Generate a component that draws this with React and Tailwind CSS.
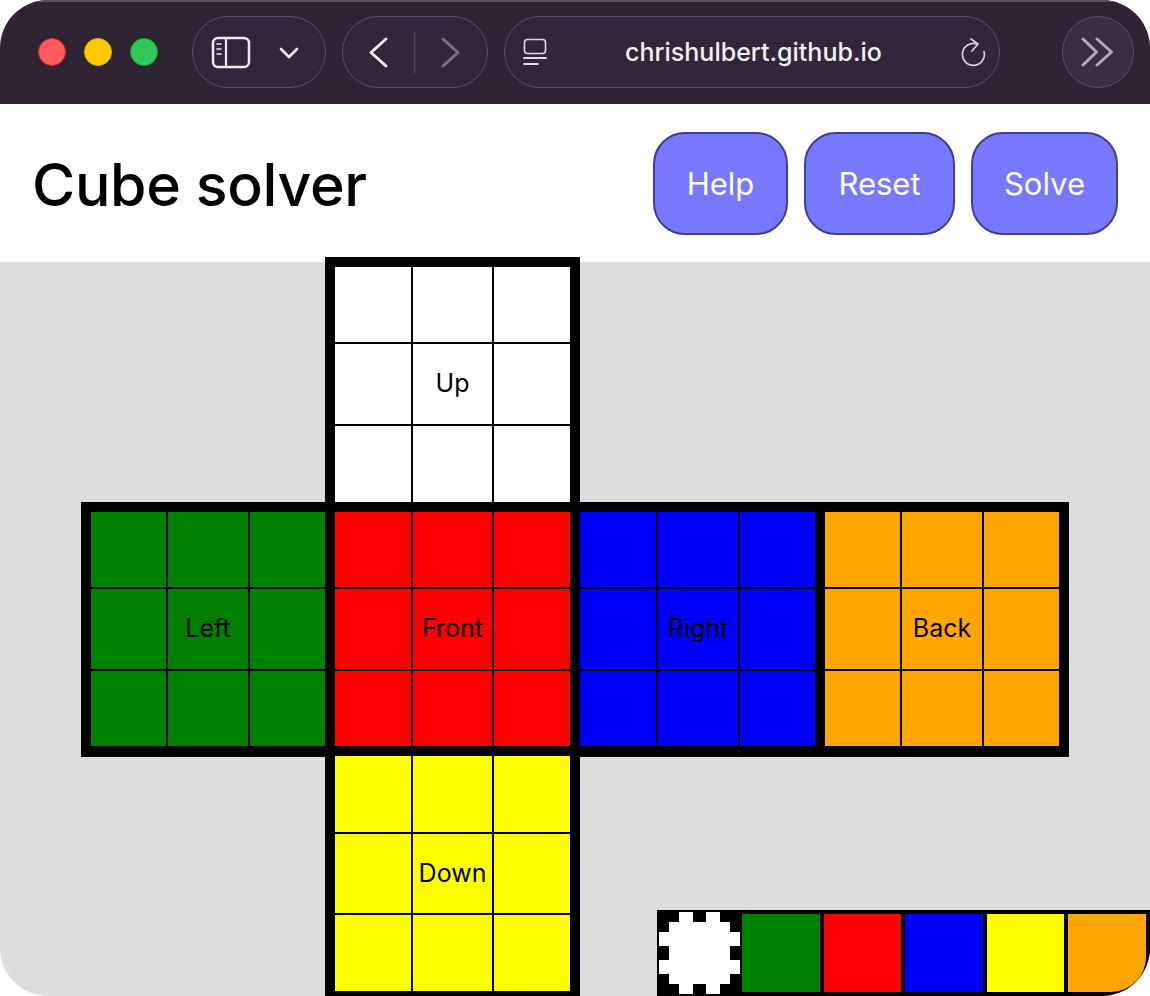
const font = { fontFamily: 'Inter, "Liberation Sans", sans-serif' }

function TrafficLight({ color, ring }) {
  return <div className={`size-[28px] rounded-full border ${color} ${ring}`}></div>
}

function Toolbar() {
  return (
    <div className="relative flex h-[104px] shrink-0 items-center bg-[#2f2433] text-white shadow-[inset_0_2px_0_#5b5158]">
      <div className="ml-[38px] flex gap-[18px]">
        <TrafficLight color="bg-[#ff5a5f]" ring="border-[#e0252c]" />
        <TrafficLight color="bg-[#ffc800]" ring="border-[#e6b400]" />
        <TrafficLight color="bg-[#34c759]" ring="border-[#12ac2e]" />
      </div>

      <div className="ml-[34px] flex h-[72px] w-[134px] items-center rounded-full border-[1.5px] border-[#664a70] bg-[#32273a]">
        <svg width="131" height="69" viewBox="0 0 131 69" fill="none" stroke="#ececec" strokeLinecap="round" strokeLinejoin="round">
          <rect x="20" y="20" width="36" height="29" rx="5" strokeWidth="2.5" />
          <path d="M33 20V49" strokeWidth="2.2" />
          <path d="M24 26H28M24 31H28M24 36H28" strokeWidth="1.6" />
          <path d="M88 31L96 39L104 31" strokeWidth="2.6" />
        </svg>
      </div>

      <div className="ml-[16px] flex h-[72px] w-[146px] items-center rounded-full border-[1.5px] border-[#664a70] bg-[#32273a]">
        <svg width="143" height="69" viewBox="0 0 143 69" fill="none" strokeLinecap="round" strokeLinejoin="round">
          <path d="M43 21L28 34.500L43 48" stroke="#f0f0f0" strokeWidth="3" />
          <path d="M71.500 15V55" stroke="#4f4454" strokeWidth="1.600" />
          <path d="M100 21L115 34.500L100 48" stroke="#7b7080" strokeWidth="3" />
        </svg>
      </div>

      <div className="ml-[16px] flex h-[72px] w-[496px] items-center justify-between rounded-full border-[1.5px] border-[#664a70] bg-[#32273a] pr-[13px] pl-[18px]">
        <svg width="24" height="28" viewBox="0 0 24 28" fill="none" stroke="#e0dce2" strokeLinecap="round">
          <rect x="1.500" y="1.500" width="21" height="14" rx="3" strokeWidth="1.600" />
          <path d="M1 20H23" strokeWidth="1.800" />
          <path d="M1 26H15" strokeWidth="1.800" />
        </svg>
        <span style={font} className="text-[25px] leading-none font-medium text-[#f4f1f5]">chrishulbert.github.io</span>
        <svg width="26" height="32" viewBox="0 0 26 32" fill="none" stroke="#d8d3da" strokeLinecap="round" strokeLinejoin="round" strokeWidth="1.700">
          <path d="M17 8A11 11 0 1 0 24 15.500" />
          <path d="M11 3L18 8L12 15" />
        </svg>
      </div>

      <div className="ml-[62px] flex h-[72px] w-[72px] items-center justify-center rounded-full border-[1.5px] border-[#664a70] bg-[#3a2e41]">
        <svg width="34" height="30" viewBox="0 0 34 30" fill="none" stroke="#b5a9bc" strokeLinecap="round" strokeLinejoin="round" strokeWidth="3">
          <path d="M2 2L15.500 15L2 28" />
          <path d="M16 2L30.500 15L16 28" />
        </svg>
      </div>
    </div>
  )
}

function HeaderButton({ children, width }) {
  return (
    <button style={font} className={`h-[103px] rounded-[32px] border-2 border-[#3f3f8f] bg-[#7878ff] pt-[2px] text-[31px] text-white ${width}`}>
      {children}
    </button>
  )
}

function Header() {
  return (
    <header className="flex h-[158px] shrink-0 items-center justify-between bg-linear-to-b from-[#fbfbfb] to-white to-[12%] pr-[32px] pl-[32px]">
      <h1 style={font} className="pt-[3px] text-[59px] leading-none font-[550] tracking-[-0.35px] text-black">Cube solver</h1>
      <div className="flex gap-[16px]">
        <HeaderButton width="w-[135px]">Help</HeaderButton>
        <HeaderButton width="w-[151px]">Reset</HeaderButton>
        <HeaderButton width="w-[147px]">Solve</HeaderButton>
      </div>
    </header>
  )
}

function Face({ label, color, place, cols, rows }) {
  return (
    <div className={`grid size-[255px] gap-[2px] bg-black p-[10px] ${place} ${cols} ${rows}`}>
      {[0, 1, 2, 3, 4, 5, 6, 7, 8].map((i) => (
        <div key={i} style={font} className={`flex items-center justify-center text-[25px] text-black ${color}`}>
          {i === 4 ? label : null}
        </div>
      ))}
    </div>
  )
}

function Net() {
  return (
    <div className="-mt-[5px] ml-[81px] grid grid-cols-[244px_245px_245px_254px] grid-rows-[245px_244px_255px]">
      <Face label="Up" color="bg-white" place="col-start-2 row-start-1" cols="grid-cols-[76px_79px_76px]" rows="grid-rows-[75px_80px_76px]" />
      <Face label="Left" color="bg-[#008000]" place="col-start-1 row-start-2" cols="grid-cols-[75px_80px_76px]" rows="grid-rows-[75px_80px_75px]" />
      <Face label="Front" color="bg-[#ff0000]" place="col-start-2 row-start-2" cols="grid-cols-[76px_79px_76px]" rows="grid-rows-[75px_80px_75px]" />
      <Face label="Right" color="bg-[#0000ff]" place="col-start-3 row-start-2" cols="grid-cols-[76px_80px_75px]" rows="grid-rows-[75px_80px_75px]" />
      <Face label="Back" color="bg-[#ffa500]" place="col-start-4 row-start-2 !w-[254px]" cols="grid-cols-[75px_80px_75px]" rows="grid-rows-[75px_80px_75px]" />
      <Face label="Down" color="bg-[#ffff00]" place="col-start-2 row-start-3" cols="grid-cols-[76px_79px_76px]" rows="grid-rows-[76px_79px_76px]" />
    </div>
  )
}

function Palette() {
  return (
    <div className="absolute right-0 bottom-0 flex h-[86px] w-[493px] items-start bg-black pl-[2px]">
      <svg className="mt-[2px] shrink-0" width="81" height="82" viewBox="0 0 81 82" fill="#fff">
        <path d="M20 0H34V10H47V0H61V10H71V20H81V34H71V48H81V62H71V72H61V82H47V72H34V82H20V72H10V62H0V48H10V34H0V20H10V10H20Z" />
      </svg>
      <div className="mt-[4px] ml-[2px] flex gap-[4px]">
        <div className="h-[78px] w-[78px] bg-[#008000]"></div>
        <div className="h-[78px] w-[77px] bg-[#ff0000]"></div>
        <div className="h-[78px] w-[78px] bg-[#0000ff]"></div>
        <div className="h-[78px] w-[77px] bg-[#ffff00]"></div>
        <div className="h-[78px] w-[78px] rounded-br-[35px] bg-[#ffa500]"></div>
      </div>
    </div>
  )
}

export default function App() {
  return (
    <div className="bg-white">
      <div className="relative flex h-[996px] w-[1150px] flex-col overflow-hidden rounded-t-[48px] rounded-b-[48px] bg-[#dddddd]">
        <Toolbar />
        <Header />
        <main className="relative flex-1">
          <Net />
        </main>
        <Palette />
      </div>
    </div>
  )
}
